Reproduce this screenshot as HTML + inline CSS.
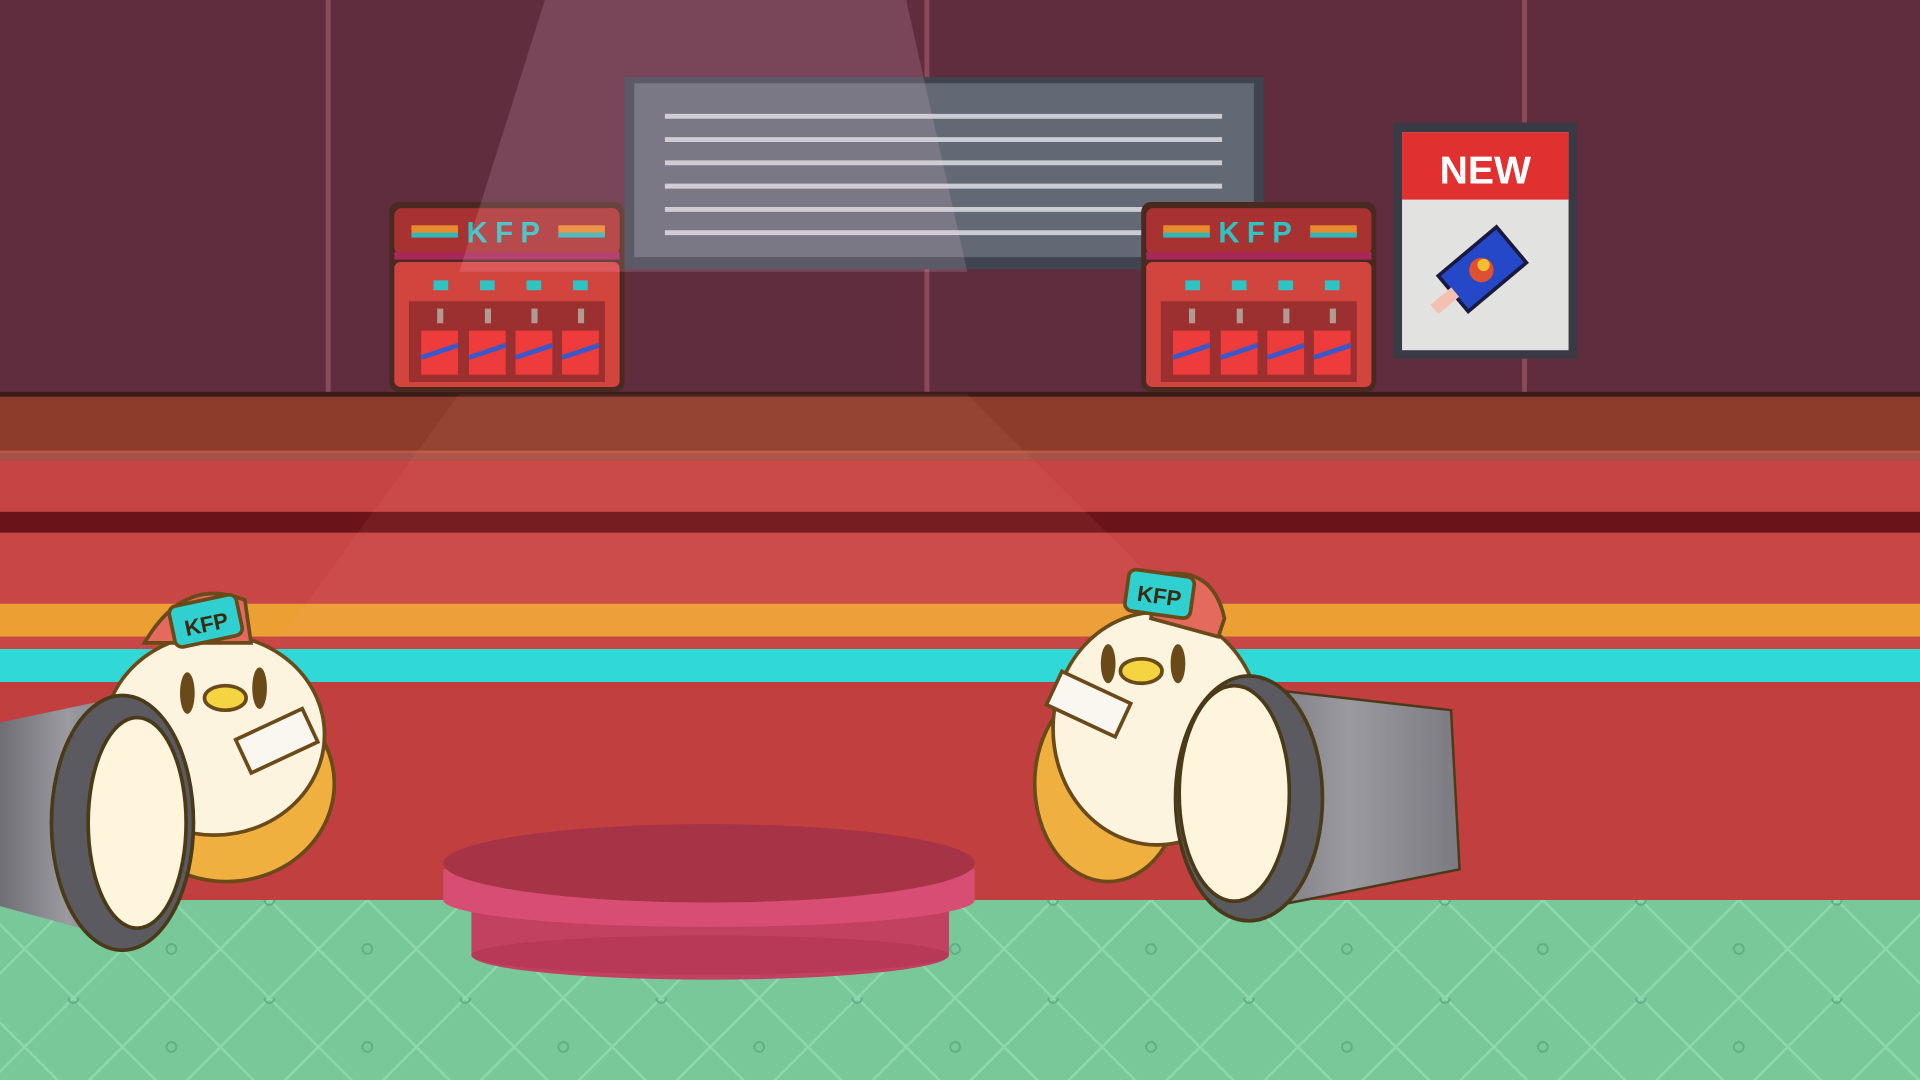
<!DOCTYPE html>
<html><head><meta charset="utf-8">
<style>
html,body{margin:0;padding:0;width:1920px;height:1080px;overflow:hidden;background:#5e2e3e}
svg{display:block}
text{font-family:"Liberation Sans",sans-serif;font-weight:bold}
</style></head><body>
<svg width="1920" height="1080" viewBox="0 0 1568 882" preserveAspectRatio="none" xmlns="http://www.w3.org/2000/svg">
<defs>
<linearGradient id="lamp" x1="0" x2="1" y1="0" y2="0"><stop offset="0" stop-color="#6e6e74"/><stop offset="0.5" stop-color="#9a9aa0"/><stop offset="1" stop-color="#7a7a80"/></linearGradient>
<pattern id="tiles" width="160" height="80" patternUnits="userSpaceOnUse" x="-20" y="735">
<rect width="160" height="80" fill="#78c89a"/>
<path d="M0 0 L80 80 M80 0 L160 80 M80 0 L0 80 M160 0 L80 80" stroke="#8ed8ae" stroke-width="2" fill="none"/>
<circle cx="80" cy="0" r="4" fill="none" stroke="#5fae84" stroke-width="1.5"/>
<circle cx="0" cy="40" r="4" fill="none" stroke="#5fae84" stroke-width="1.5"/>
<circle cx="160" cy="40" r="4" fill="none" stroke="#5fae84" stroke-width="1.5"/>
</pattern>
</defs>
<rect x="0" y="0" width="1568" height="322" fill="#5f2d3e"/>
<rect x="266" y="0" width="4" height="322" fill="#8a4a5c"/>
<rect x="755" y="0" width="4" height="322" fill="#8a4a5c"/>
<rect x="1243" y="0" width="4" height="322" fill="#8a4a5c"/>
<rect x="510" y="63" width="522" height="157" fill="#3f4450"/>
<rect x="518" y="68" width="506" height="142" fill="#626874"/>
<g stroke="#c9ccd2" stroke-width="4">
<line x1="543" y1="95" x2="998" y2="95"/><line x1="543" y1="114" x2="998" y2="114"/><line x1="543" y1="133" x2="998" y2="133"/><line x1="543" y1="152" x2="998" y2="152"/><line x1="543" y1="171" x2="998" y2="171"/><line x1="543" y1="190" x2="998" y2="190"/>
</g>
<g id="m1">
<rect x="318" y="165" width="192" height="155" rx="8" fill="#4a2a20"/>
<rect x="322" y="170" width="184" height="38" rx="6" fill="#a83232"/>
<rect x="336" y="184" width="38" height="8" fill="#e8892e"/><rect x="336" y="190" width="38" height="4" fill="#2fb8b8"/>
<rect x="456" y="184" width="38" height="8" fill="#e8892e"/><rect x="456" y="190" width="38" height="4" fill="#2fb8b8"/>
<text x="414" y="198" font-size="24" fill="#2ec4c4" text-anchor="middle" letter-spacing="6">KFP</text>
<rect x="322" y="206" width="184" height="6" fill="#a8285a"/>
<rect x="322" y="214" width="184" height="102" rx="5" fill="#d2453e"/>
<rect x="354" y="229" width="12" height="8" fill="#2ec4c4"/><rect x="392" y="229" width="12" height="8" fill="#2ec4c4"/><rect x="430" y="229" width="12" height="8" fill="#2ec4c4"/><rect x="468" y="229" width="12" height="8" fill="#2ec4c4"/>
<rect x="334" y="246" width="160" height="66" fill="#9c2f2f"/>
<g fill="#b39a90"><rect x="357" y="252" width="5" height="12"/><rect x="396" y="252" width="5" height="12"/><rect x="434" y="252" width="5" height="12"/><rect x="472" y="252" width="5" height="12"/></g>
<g fill="#ee3b3b"><rect x="344" y="270" width="30" height="36"/><rect x="383" y="270" width="30" height="36"/><rect x="421" y="270" width="30" height="36"/><rect x="459" y="270" width="30" height="36"/></g>
<g stroke="#3a58c8" stroke-width="4"><line x1="344" y1="292" x2="374" y2="282"/><line x1="383" y1="292" x2="413" y2="282"/><line x1="421" y1="292" x2="451" y2="282"/><line x1="459" y1="292" x2="489" y2="282"/></g>
</g>
<use href="#m1" transform="translate(614,0)"/>
<rect x="1138" y="100" width="150" height="193" fill="#3a3a44"/>
<rect x="1145" y="108" width="136" height="178" fill="#e2e2e0"/>
<rect x="1145" y="108" width="136" height="55" fill="#e03030"/>
<text x="1213" y="150" font-size="32" fill="#fff" text-anchor="middle">NEW</text>
<g transform="rotate(-40 1212 220)">
<rect x="1180" y="200" width="62" height="38" fill="#2448c8" stroke="#1a1a40" stroke-width="3"/>
<circle cx="1210" cy="219" r="10" fill="#e05030"/><circle cx="1214" cy="217" r="5" fill="#f0c030"/>
<rect x="1160" y="214" width="22" height="10" fill="#f4c0b0"/>
</g>
<polygon points="445,0 740,0 790,222 375,222" fill="#ffd0e0" opacity="0.16"/>
<rect x="0" y="320" width="1568" height="4" fill="#3a1c18"/>
<rect x="0" y="324" width="1568" height="46" fill="#8d3c2c"/>
<rect x="0" y="368" width="1568" height="8" fill="#d86a50" opacity="0.6"/>
<rect x="0" y="376" width="1568" height="44" fill="#c64444"/>
<rect x="0" y="418" width="1568" height="17" fill="#6a1318"/>
<rect x="0" y="435" width="1568" height="58" fill="#c84646"/>
<rect x="0" y="493" width="1568" height="27" fill="#eca034"/>
<rect x="0" y="520" width="1568" height="10" fill="#c84646"/>
<rect x="0" y="530" width="1568" height="27" fill="#30d8d8"/>
<rect x="0" y="557" width="1568" height="180" fill="#c23f40"/>
<polygon points="375,322 790,322 990,520 230,520" fill="#ff9a80" opacity="0.08"/>
<rect x="0" y="735" width="1568" height="147" fill="url(#tiles)"/>
<path d="M385 715 L385 780 A195 20 0 0 0 775 780 L775 715 Z" fill="#c24060"/>
<ellipse cx="580" cy="780" rx="195" ry="16" fill="#b83858"/>
<path d="M362 710 L362 735 A217 22 0 0 0 796 735 L796 710 Z" fill="#d84d72"/>
<ellipse cx="579" cy="705" rx="217" ry="32" fill="#a63346"/>
<g>
<ellipse cx="185" cy="640" rx="88" ry="80" fill="#f0b040" stroke="#6a4a18" stroke-width="3"/>
<ellipse cx="175" cy="600" rx="90" ry="82" fill="#fdf4e0" stroke="#6a4a18" stroke-width="3"/>
<path d="M118 525 Q150 470 200 490 L205 525 Z" fill="#e46a5e" stroke="#6a4a18" stroke-width="3"/>
<rect x="140" y="490" width="56" height="34" rx="6" fill="#30d0d0" stroke="#6a4a18" stroke-width="3" transform="rotate(-12 168 507)"/>
<text x="168" y="516" font-size="18" fill="#3a2a10" text-anchor="middle" transform="rotate(-12 168 507)">KFP</text>
<ellipse cx="153" cy="566" rx="6" ry="17" fill="#6a4a18"/><ellipse cx="212" cy="562" rx="6" ry="17" fill="#6a4a18"/>
<ellipse cx="184" cy="570" rx="17" ry="10" fill="#f4d440" stroke="#6a4a18" stroke-width="3"/>
<rect x="196" y="590" width="60" height="30" fill="#faf6f0" stroke="#6a4a18" stroke-width="3" transform="rotate(-25 226 605)"/>
</g>
<path d="M0 590 L95 570 L110 770 L0 740 Z" fill="url(#lamp)"/>
<ellipse cx="100" cy="672" rx="58" ry="104" fill="#5a5a60" stroke="#4a3a18" stroke-width="3"/>
<ellipse cx="112" cy="672" rx="40" ry="86" fill="#fff4dc" stroke="#4a3a18" stroke-width="3"/>
<g>
<ellipse cx="905" cy="640" rx="60" ry="80" fill="#f0b040" stroke="#6a4a18" stroke-width="3"/>
<ellipse cx="945" cy="595" rx="85" ry="95" fill="#fdf4e0" stroke="#6a4a18" stroke-width="3"/>
<path d="M945 470 Q990 460 1000 505 L995 520 L940 505 Z" fill="#e46a5e" stroke="#6a4a18" stroke-width="3"/>
<rect x="920" y="468" width="54" height="34" rx="6" fill="#30d0d0" stroke="#6a4a18" stroke-width="3" transform="rotate(8 947 485)"/>
<text x="947" y="493" font-size="18" fill="#3a2a10" text-anchor="middle" transform="rotate(8 947 485)">KFP</text>
<ellipse cx="905" cy="542" rx="6" ry="16" fill="#6a4a18"/><ellipse cx="962" cy="542" rx="6" ry="16" fill="#6a4a18"/>
<ellipse cx="932" cy="548" rx="17" ry="10" fill="#f4d440" stroke="#6a4a18" stroke-width="3"/>
<rect x="858" y="560" width="62" height="30" fill="#faf6f0" stroke="#6a4a18" stroke-width="3" transform="rotate(25 889 575)"/>
</g>
<path d="M1010 560 L1185 580 L1192 710 L1040 740 Z" fill="url(#lamp)" stroke="#4a3a18" stroke-width="2"/>
<ellipse cx="1020" cy="652" rx="60" ry="100" fill="#5a5a60" stroke="#4a3a18" stroke-width="3"/>
<ellipse cx="1008" cy="648" rx="45" ry="88" fill="#fff4dc" stroke="#4a3a18" stroke-width="3"/>
</svg>
</body></html>
